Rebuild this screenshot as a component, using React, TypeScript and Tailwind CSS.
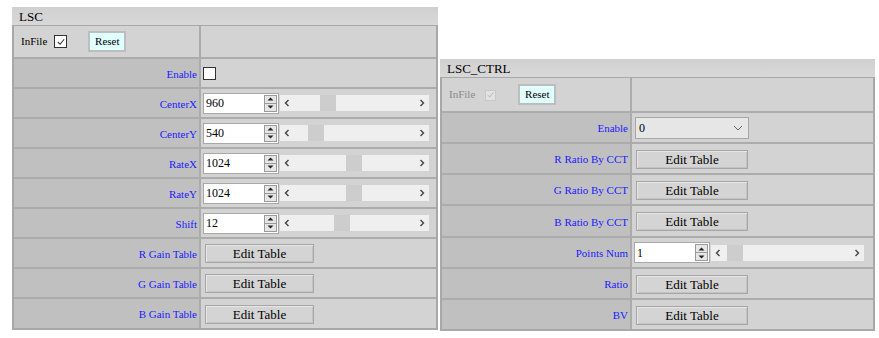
import React from 'react';

type Row =
  | { label: string; kind: 'check' }
  | { label: string; kind: 'spin'; value: string; thumb: number }
  | { label: string; kind: 'table' }
  | { label: string; kind: 'select'; value: string };

const serif = "font-['Liberation_Serif',serif]";

const lscRows: Row[] = [
  { label: 'Enable', kind: 'check' },
  { label: 'CenterX', kind: 'spin', value: '960', thumb: 40 },
  { label: 'CenterY', kind: 'spin', value: '540', thumb: 28 },
  { label: 'RateX', kind: 'spin', value: '1024', thumb: 66 },
  { label: 'RateY', kind: 'spin', value: '1024', thumb: 66 },
  { label: 'Shift', kind: 'spin', value: '12', thumb: 54 },
  { label: 'R Gain Table', kind: 'table' },
  { label: 'G Gain Table', kind: 'table' },
  { label: 'B Gain Table', kind: 'table' },
];

const ctrlRows: Row[] = [
  { label: 'Enable', kind: 'select', value: '0' },
  { label: 'R Ratio By CCT', kind: 'table' },
  { label: 'G Ratio By CCT', kind: 'table' },
  { label: 'B Ratio By CCT', kind: 'table' },
  { label: 'Points Num', kind: 'spin', value: '1', thumb: 16 },
  { label: 'Ratio', kind: 'table' },
  { label: 'BV', kind: 'table' },
];

const CheckBox = ({ checked, disabled }: { checked?: boolean; disabled?: boolean }) => (
  <span
    className={`inline-flex items-center justify-center border ${
      disabled ? 'h-[11px] w-[11px] border-[#c8c8c8] bg-[#e2e2e2]' : 'h-[13px] w-[13px] border-[#333] bg-white'
    }`}
  >
    {checked && (
      <svg width="10" height="10" viewBox="0 0 11 11">
        <path d="M2 5.5 L4.5 8 L9 2.5" fill="none" stroke={disabled ? '#b4b4b4' : '#333'} strokeWidth="1.2" />
      </svg>
    )}
  </span>
);

const Spin = ({ value, thumb, width }: { value: string; thumb: number; width: number }) => (
  <div className="flex items-center">
    <div className="flex h-[21px] w-[76px] items-center border border-[#a8a8a8] bg-white">
      <span className={`${serif} flex-1 pl-[2px] text-[12px] leading-none text-black`}>{value}</span>
      <div className="mr-[1px] flex h-[17px] w-[13px] flex-col border border-[#9a9a9a] bg-[#e6e6e6]">
        <div className="flex flex-1 items-center justify-center border-b border-[#9a9a9a]">
          <svg width="7" height="4" viewBox="0 0 7 4"><path d="M0.5 3.5 L3.5 0.5 L6.5 3.5 Z" fill="#222" /></svg>
        </div>
        <div className="flex flex-1 items-center justify-center">
          <svg width="7" height="4" viewBox="0 0 7 4"><path d="M0.5 0.5 L3.5 3.5 L6.5 0.5 Z" fill="#222" /></svg>
        </div>
      </div>
    </div>
    <div className="relative ml-[1px] flex h-[16px] items-center justify-between bg-[#efefef] px-[4px]" style={{ width }}>
      <svg width="6" height="8" viewBox="0 0 6 8"><path d="M4.5 1 L1.5 4 L4.5 7" fill="none" stroke="#444" strokeWidth="1.4" /></svg>
      <svg width="6" height="8" viewBox="0 0 6 8"><path d="M1.5 1 L4.5 4 L1.5 7" fill="none" stroke="#444" strokeWidth="1.4" /></svg>
      <div className="absolute top-0 h-[16px] w-[16px] bg-[#cdcdcd]" style={{ left: thumb }} />
    </div>
  </div>
);

const EditTable = ({ width }: { width: number }) => (
  <button
    className={`${serif} h-[19px] border border-[#a6a6a6] bg-[#d4d4d4] text-[13px] leading-none text-black shadow-[inset_1px_1px_0_#e6e6e6,inset_-1px_-1px_0_#c4c4c4]`}
    style={{ width }}
  >
    Edit Table
  </button>
);

const Panel = ({
  title,
  rows,
  labelW,
  width,
  firstH,
  rowH,
  disabled,
  scrollW,
  btnW,
}: {
  title: string;
  rows: Row[];
  labelW: number;
  width: number;
  firstH: number;
  rowH: number[];
  disabled?: boolean;
  scrollW: number;
  btnW: number;
}) => (
  <div className="bg-[#d3d3d3]" style={{ width }}>
    <div className={`${serif} h-[18px] bg-gradient-to-b from-[#d0d0d0] to-[#d8d8d8] pl-[7px] text-[13px] leading-[19px] text-black`}>{title}</div>
    <div className="border-2 border-t-[1px] border-[#a8a8a8]">
      <div className="flex" style={{ height: firstH }}>
        <div className="flex items-center border-r-2 border-[#acacac] pl-[7px]" style={{ width: labelW }}>
          <span className={`${serif} text-[11px] ${disabled ? 'text-[#8a8a8a]' : 'text-black'}`}>InFile</span>
          <span className={disabled ? 'ml-[10px] mt-[1px]' : 'ml-[7px]'}>
            <CheckBox checked disabled={disabled} />
          </span>
          <button
            className={`${serif} h-[21px] w-[38px] border-2 border-[#bdbdbd] bg-[#e0ffff] text-[11px] leading-none text-black ${
              disabled ? 'ml-[22px]' : 'ml-[21px]'
            }`}
          >
            Reset
          </button>
        </div>
        <div className="flex-1" />
      </div>
      {rows.map((r, i) => (
        <div key={i} className="flex border-t-2 border-[#acacac]" style={{ height: rowH[i] }}>
          <div
            className={`${serif} flex items-center justify-end border-r-2 border-[#acacac] bg-[#c0c0c0] pr-[2px] pt-[2px] text-[11px] text-[#1a1aff]`}
            style={{ width: labelW }}
          >
            {r.label}
          </div>
          <div className="flex flex-1 items-center pl-[2px]">
            {r.kind === 'check' && <CheckBox />}
            {r.kind === 'spin' && <Spin value={r.value} thumb={r.thumb} width={scrollW} />}
            {r.kind === 'table' && (
              <div className="pl-[2px]">
                <EditTable width={btnW} />
              </div>
            )}
            {r.kind === 'select' && (
              <div className="ml-[1px] flex h-[22px] w-[114px] items-center justify-between border border-[#a8a8a8] bg-[#e6e6e6] pl-[3px] pr-[5px]">
                <span className={`${serif} text-[12px] text-black`}>{r.value}</span>
                <svg width="10" height="6" viewBox="0 0 10 6"><path d="M1 1 L5 5 L9 1" fill="none" stroke="#666" strokeWidth="1" /></svg>
              </div>
            )}
          </div>
        </div>
      ))}
    </div>
  </div>
);

export default function App() {
  return (
    <div className={`${serif} flex h-[338px] w-[879px] items-start gap-[2px] bg-white pl-[12px] pt-[7px]`}>
      <Panel
        title="LSC"
        rows={lscRows}
        labelW={187}
        width={426}
        firstH={31}
        rowH={[30, 30, 30, 30, 30, 30, 30, 30, 31]}
        scrollW={149}
        btnW={109}
      />
      <div className="mt-[52px]">
        <Panel
          title="LSC_CTRL"
          rows={ctrlRows}
          labelW={190}
          width={435}
          firstH={33}
          rowH={[31, 31, 31, 32, 31, 31, 31]}
          disabled
          scrollW={153}
          btnW={112}
        />
      </div>
    </div>
  );
}
